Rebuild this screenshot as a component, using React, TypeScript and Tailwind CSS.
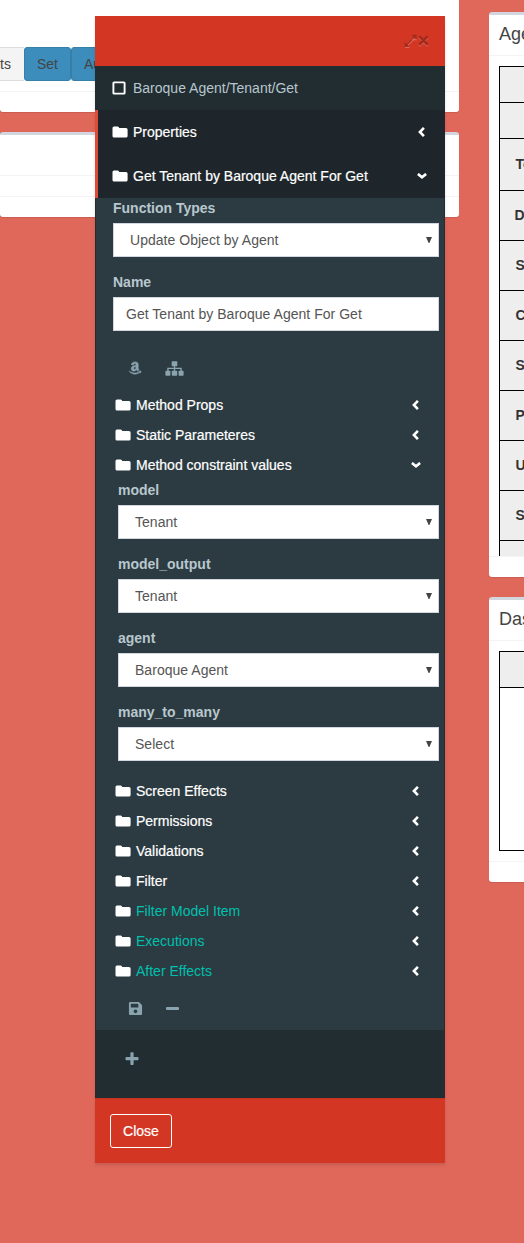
import React from "react";
import { FaAmazon, FaSave } from "react-icons/fa";

function Angle({ open }: { open?: boolean }) {
  return open ? (
    <svg className="h-[6px] w-[10px]" viewBox="0 0 10 6" fill="none" stroke="#fff" strokeWidth="2.6">
      <path d="M0.9 0.9 5 4.3 9.1 0.9" />
    </svg>
  ) : (
    <svg className="mr-[2px] h-[10px] w-[7px]" viewBox="0 0 7 10" fill="none" stroke="#fff" strokeWidth="2.6">
      <path d="M5.9 0.9 1.9 5 5.9 9.1" />
    </svg>
  );
}

function Folder() {
  return (
    <svg className="mr-[5px] h-[12px] w-[16px] shrink-0" viewBox="0 0 16 12" fill="#fff">
      <path d="M2 0.4h3.6Q7 0.4 7.2 2H14Q15.6 2 15.6 3.5V10Q15.6 11.5 14 11.5H2Q0.5 11.5 0.5 10V2Q0.5 0.4 2 0.4z" />
    </svg>
  );
}

function TopRow({ text, open }: { text: string; open?: boolean }) {
  return (
    <div className="flex h-11 items-center border-l-[3px] border-[#dd4b39] bg-[#1e262b] pr-[18px] pl-[14px] text-white">
      <Folder />
      <span className="flex-1 whitespace-nowrap [-webkit-text-stroke:0.2px]">{text}</span>
      <Angle open={open} />
    </div>
  );
}

function TreeRow({ text, open, teal }: { text: string; open?: boolean; teal?: boolean }) {
  return (
    <div className="flex h-[30px] items-center pr-[23px] pl-[19px] text-white">
      <Folder />
      <span className={teal ? "flex-1 text-[#00c0ae]" : "flex-1 [-webkit-text-stroke:0.2px]"}>{text}</span>
      <Angle open={open} />
    </div>
  );
}

function Field({ label, value, nested, input }: { label: string; value: string; nested?: boolean; input?: boolean }) {
  return (
    <div className={nested ? "mb-[15px] pl-[22px] pr-[5px]" : "mb-[15px] pl-[17px] pr-[5px]"}>
      <div className="mb-[5px] h-5 font-bold text-[#b8c7ce]">{label}</div>
      <div className={`flex h-[34px] items-center justify-between border border-[#d2d6de] bg-white pr-[6px] tracking-[0.03px] text-[#555] ${input ? "pl-3" : "pl-4"}`}>
        <span>{value}</span>
        {!input && (
          <svg className="h-[6px] w-[6px]" viewBox="0 0 6 6" fill="#444">
            <path d="M0 0h6L3.4 6H2.6z" />
          </svg>
        )}
      </div>
    </div>
  );
}

const rows = ["S", "C", "S", "P", "U", "S"];

function Cell({ text, className }: { text?: string; className: string }) {
  return (
    <div className={`flex shrink-0 items-center border-t border-l border-black bg-[#eee] pb-px font-bold text-[#333] ${className}`}>
      {text}
    </div>
  );
}

export default function App() {
  return (
    <div className="relative h-[1243px] w-[524px] overflow-hidden bg-[#e0685b] font-['Liberation_Sans',Arial,sans-serif] text-[14px] leading-5">
      <div className="flex w-[640px] items-start gap-[30px]">
        <div className="w-[459px]">
          <div className="h-[112px] rounded-b-[3px] bg-white pt-[47px] shadow-[0_1px_1px_rgba(0,0,0,0.1)]">
            <div className="flex h-[34px]">
              <div className="flex w-6 items-center border-y border-[#ddd] bg-[#f4f4f4] text-[#444]">ts</div>
              <div className="flex w-[47px] items-center justify-center rounded-[3px] border border-[#367fa9] bg-[#3c8dbc] text-[#444]">Set</div>
              <div className="flex w-[60px] items-center rounded-[3px] border border-[#367fa9] bg-[#3c8dbc] pl-3 text-[#444]">Auth</div>
            </div>
            <div className="mt-[10px] h-px bg-[#f4f4f4]" />
          </div>
          <div className="mt-5 h-[85px] rounded-[3px] border-t-[3px] border-[#d2d6de] bg-white pt-10 shadow-[0_1px_1px_rgba(0,0,0,0.1)]">
            <div className="h-[22px] border-y border-[#f4f4f4]" />
          </div>
        </div>
        <div className="w-[150px] pt-3">
          <div className="flex h-[565px] flex-col rounded-[3px] border-t-[3px] border-[#d2d6de] bg-white shadow-[0_1px_1px_rgba(0,0,0,0.1)]">
            <div className="h-[41px] shrink-0 border-b border-[#f4f4f4] pt-[9px] pl-[10px] text-[18px] leading-5 text-[#444]">Agent</div>
            <div className="flex h-[500px] shrink-0 flex-col overflow-hidden pt-[10px] pl-[10px]">
              <Cell className="h-9" />
              <Cell className="h-9" />
              <Cell className="h-[52px] pl-[15.5px]" text="To" />
              <Cell className="h-[50px] pl-[14.5px]" text="D" />
              {rows.map((r, i) => (
                <Cell key={i} className="h-[50px] pl-[15.5px]" text={r} />
              ))}
              <Cell className="h-[50px]" />
            </div>
            <div className="h-px bg-[#f4f4f4]" />
          </div>
          <div className="mt-5 h-[285px] rounded-[3px] border-t-[3px] border-[#d2d6de] bg-white shadow-[0_1px_1px_rgba(0,0,0,0.1)]">
            <div className="h-[41px] border-b border-[#f4f4f4] pt-[9px] pl-[10px] text-[18px] leading-5 text-[#444]">Dashboard</div>
            <div className="h-[221px] border-b border-[#f4f4f4] pt-[10px] pl-[10px]">
              <div className="h-[200px] border border-black">
                <div className="h-9 border-b border-black bg-[#eee]" />
              </div>
            </div>
          </div>
        </div>
      </div>

      <div className="absolute top-4 left-[95px] w-[350px] bg-[#222d32] shadow-[0_2px_3px_rgba(0,0,0,0.125)]">
        <div className="flex h-[50px] items-center justify-end bg-[#d33724] pr-[16px]">
          <svg className="mr-px h-[14px] w-[13px]" viewBox="0 0 13 14" fill="none">
            <path d="M2.5 12.5 11.5 3.5" stroke="#dd6759" strokeWidth="1.2" />
            <path d="M2 11.5 11 2.5" stroke="#a83021" strokeWidth="1.3" />
            <path d="M1 13.4h4.5M8 5.8h4.8" stroke="#dd7568" strokeWidth="0.9" />
            <path d="M7.6 0.8H12.6V5.6L11 4.2 9 2.4zM0.6 8V12.8H5.4L4 11.2 2.2 9.4z" fill="#a02c1d" />
          </svg>
          <svg className="h-[12px] w-[11px]" viewBox="0 0 11 12" fill="none" strokeWidth="2.6">
            <path d="M1.2 2.2 9.8 10.8M9.8 2.2 1.2 10.8" stroke="#dd6759" />
            <path d="M1.2 1.2 9.8 9.8M9.8 1.2 1.2 9.8" stroke="#a32b1c" />
          </svg>
        </div>
        <div className="flex h-11 items-center pl-[17px] text-[#b8c7ce]">
          <svg className="mr-[7px] size-[14px]" viewBox="0 0 14 14" fill="none" stroke="#fff" strokeWidth="1.9">
            <rect x="1.4" y="1.4" width="11.2" height="11.2" rx="0.7" />
          </svg>
          Baroque Agent/Tenant/Get
        </div>
        <TopRow text="Properties" />
        <TopRow text="Get Tenant by Baroque Agent For Get" open />
        <div className="mx-px h-[832px] bg-[#2c3b41]">
          <Field label="Function Types" value="Update Object by Agent" />
          <Field label="Name" value="Get Tenant by Baroque Agent For Get" input />
          <div className="flex h-11 items-center pl-[32px] text-[#8aa4af]">
            <FaAmazon className="mr-[23px] h-[14px] w-[14px] stroke-[22]" />
            <svg className="h-[15px] w-[19px]" viewBox="0 0 19 15" fill="currentColor">
              <rect x="6.7" y="0.2" width="5.6" height="5" rx="0.8" />
              <rect x="0.4" y="9.8" width="5" height="5" rx="0.8" />
              <rect x="6.8" y="9.8" width="5.4" height="5" rx="0.8" />
              <rect x="13.6" y="9.8" width="5" height="5" rx="0.8" />
              <path d="M9.5 5v5M2.9 10V7.4h13.2V10" fill="none" stroke="currentColor" strokeWidth="1.3" />
            </svg>
          </div>
          <TreeRow text="Method Props" />
          <TreeRow text="Static Parameteres" />
          <TreeRow text="Method constraint values" open />
          <Field nested label="model" value="Tenant" />
          <Field nested label="model_output" value="Tenant" />
          <Field nested label="agent" value="Baroque Agent" />
          <Field nested label="many_to_many" value="Select" />
          <TreeRow text="Screen Effects" />
          <TreeRow text="Permissions" />
          <TreeRow text="Validations" />
          <TreeRow text="Filter" />
          <TreeRow text="Filter Model Item" teal />
          <TreeRow text="Executions" teal />
          <TreeRow text="After Effects" teal />
          <div className="flex h-11 items-center pl-[32px] text-[#8aa4af]">
            <FaSave className="mr-[23px] size-[15px]" />
            <div className="h-[3px] w-[13px] rounded-[1px] bg-[#8aa4af]" />
          </div>
        </div>
        <div className="h-[68px] pt-[22px] pl-[30px] text-[#8aa4af]">
          <svg className="size-[14px]" viewBox="0 0 14 14" fill="currentColor">
            <rect x="0.5" y="5.1" width="13" height="3.2" rx="0.8" />
            <rect x="5.4" y="0.3" width="3.2" height="12.8" rx="0.8" />
          </svg>
        </div>
        <div className="h-[65px] border-t border-[#c23321] bg-[#d33724] pt-[15px] pl-[15px]">
          <button className="flex h-[34px] w-[62px] items-center justify-center rounded-[3px] border border-white text-white [-webkit-text-stroke:0.2px]">Close</button>
        </div>
      </div>
    </div>
  );
}
